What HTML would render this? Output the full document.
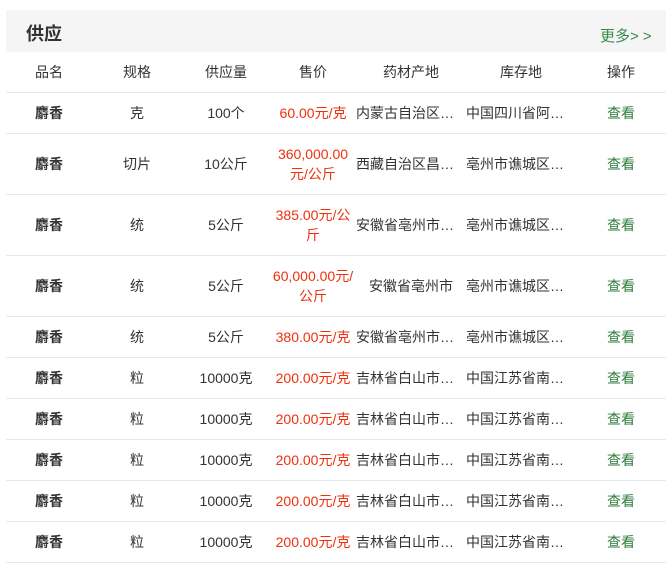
<!DOCTYPE html>
<html><head><meta charset="utf-8"><style>
body{margin:0;background:#fff;font-family:"Liberation Sans","Noto Sans CJK SC",sans-serif;color:#333;font-size:14px;}
.wrap{position:absolute;left:6px;top:10px;width:660px;}
.hd{height:42px;background:#f5f5f5;position:relative;}
.hd b{position:absolute;left:20px;top:10px;font-size:18px;color:#333;}
.hd a{position:absolute;left:594px;top:15px;font-size:15px;color:#3a8a4a;text-decoration:none;}
table{border-collapse:collapse;width:660px;table-layout:fixed;}
td,th{text-align:center;font-weight:normal;padding:0;border-bottom:1px solid #e8e8e8;line-height:20px;white-space:nowrap;overflow:hidden;}
th{height:40px;}
tr.s td{height:40px;}
tr.t td{height:60px;}
td.n{font-weight:bold;}
td.p{color:#f0300c;white-space:normal;}
td.l{text-align:left;}
td.g{color:#2e7d3e;}
</style></head><body>
<div class="wrap">
<div class="hd"><b>供应</b><a>更多&gt; &gt;</a></div>
<table>
<colgroup><col style="width:86px"><col style="width:90px"><col style="width:88px"><col style="width:86px"><col style="width:110px"><col style="width:110px"><col style="width:90px"></colgroup>
<tr><th>品名</th><th>规格</th><th>供应量</th><th>售价</th><th>药材产地</th><th>库存地</th><th>操作</th></tr>
<tr class="s"><td class="n">麝香</td><td>克</td><td>100个</td><td class="p">60.00元/克</td><td class="l">内蒙古自治区…</td><td class="l">中国四川省阿…</td><td class="g">查看</td></tr>
<tr class="t"><td class="n">麝香</td><td>切片</td><td>10公斤</td><td class="p">360,000.00<br>元/公斤</td><td class="l">西藏自治区昌…</td><td class="l">亳州市谯城区…</td><td class="g">查看</td></tr>
<tr class="t"><td class="n">麝香</td><td>统</td><td>5公斤</td><td class="p">385.00元/公<br>斤</td><td class="l">安徽省亳州市…</td><td class="l">亳州市谯城区…</td><td class="g">查看</td></tr>
<tr class="t"><td class="n">麝香</td><td>统</td><td>5公斤</td><td class="p">60,000.00元/<br>公斤</td><td>安徽省亳州市</td><td class="l">亳州市谯城区…</td><td class="g">查看</td></tr>
<tr class="s"><td class="n">麝香</td><td>统</td><td>5公斤</td><td class="p">380.00元/克</td><td class="l">安徽省亳州市…</td><td class="l">亳州市谯城区…</td><td class="g">查看</td></tr>
<tr class="s"><td class="n">麝香</td><td>粒</td><td>10000克</td><td class="p">200.00元/克</td><td class="l">吉林省白山市…</td><td class="l">中国江苏省南…</td><td class="g">查看</td></tr>
<tr class="s"><td class="n">麝香</td><td>粒</td><td>10000克</td><td class="p">200.00元/克</td><td class="l">吉林省白山市…</td><td class="l">中国江苏省南…</td><td class="g">查看</td></tr>
<tr class="s"><td class="n">麝香</td><td>粒</td><td>10000克</td><td class="p">200.00元/克</td><td class="l">吉林省白山市…</td><td class="l">中国江苏省南…</td><td class="g">查看</td></tr>
<tr class="s"><td class="n">麝香</td><td>粒</td><td>10000克</td><td class="p">200.00元/克</td><td class="l">吉林省白山市…</td><td class="l">中国江苏省南…</td><td class="g">查看</td></tr>
<tr class="s"><td class="n">麝香</td><td>粒</td><td>10000克</td><td class="p">200.00元/克</td><td class="l">吉林省白山市…</td><td class="l">中国江苏省南…</td><td class="g">查看</td></tr>
</table>
</div>
</body></html>
